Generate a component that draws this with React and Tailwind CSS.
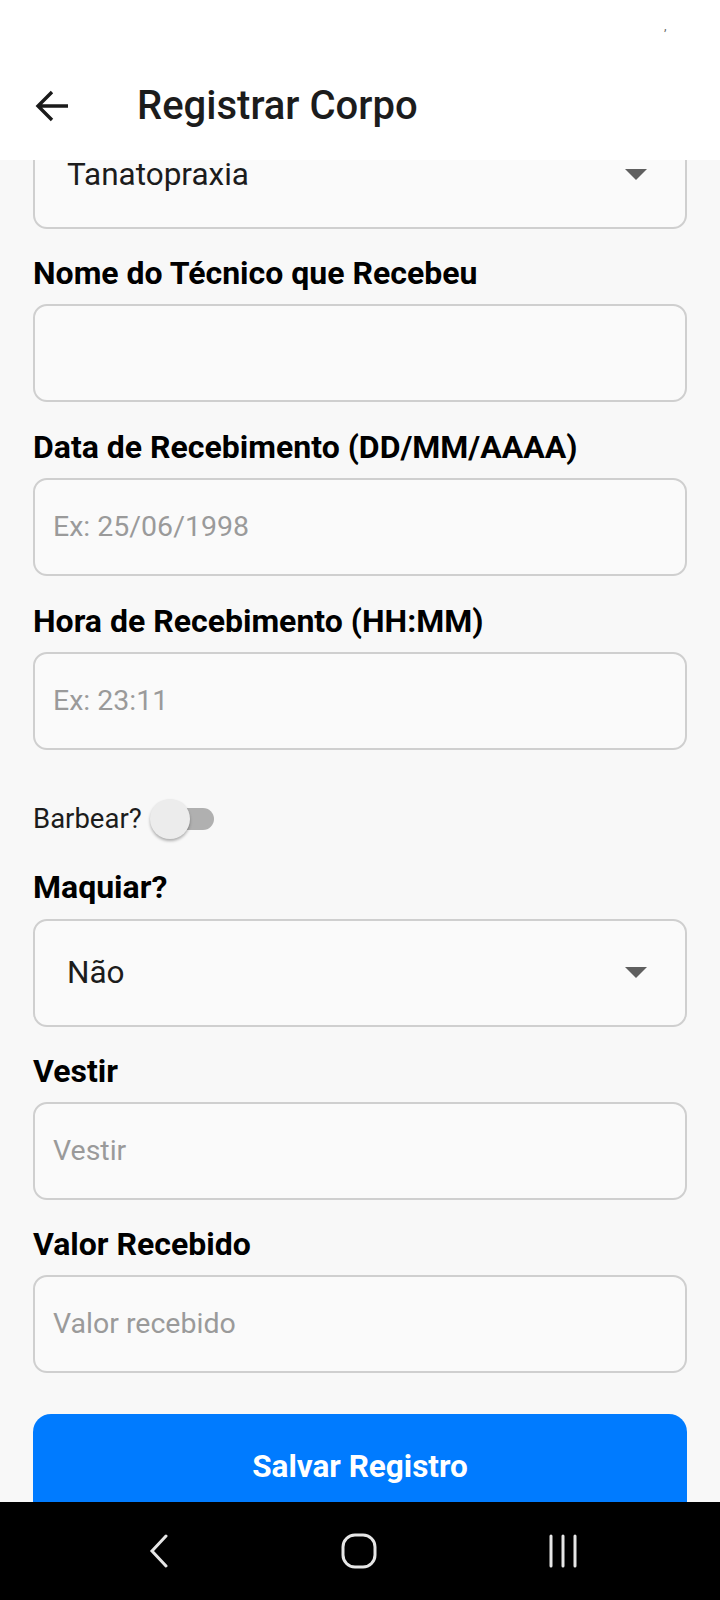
// App.jsx
const font = { fontFamily: "Roboto, 'Noto Sans', sans-serif" };

function Caret() {
  return (
    <svg width="22" height="12" viewBox="0 0 22 12" className="shrink-0">
      <path d="M0 0 H22 L11 11 Z" fill="#5f5f5f" />
    </svg>
  );
}

function SelectBox({ value, className = "" }) {
  return (
    <div
      className={`h-[108px] rounded-[14px] border-2 border-[#cfcfcf] bg-[#fafafa] flex items-center justify-between pl-[32px] pr-[38px] ${className}`}
    >
      <span className="text-[31.5px] text-[#1c1c1c]">{value}</span>
      <Caret />
    </div>
  );
}

function Field({ label, placeholder, className = "" }) {
  return (
    <div className={className}>
      <div className="text-[32px] font-bold leading-[34px] text-black mb-[14px]">{label}</div>
      <div className="h-[98px] rounded-[14px] border-2 border-[#cfcfcf] bg-[#fafafa] flex items-center pl-[18px]">
        {placeholder && <span className="text-[28.5px] text-[#9a9a9a]">{placeholder}</span>}
      </div>
    </div>
  );
}

export default function App() {
  return (
    <div className="w-[720px] h-[1600px] flex flex-col bg-[#f8f8f8] overflow-hidden" style={font}>
      {/* Header */}
      <div className="h-[160px] bg-white shrink-0 relative z-10 flex items-end">
        <div className="h-[108px] flex items-center w-full">
          <svg width="34" height="32" viewBox="0 0 34 32" className="ml-[35px]">
            <path d="M33 16 H4 M17 2 L3 16 L17 30" fill="none" stroke="#1a1a1a" strokeWidth="3.4" />
          </svg>
          <h1 className="ml-[68px] text-[40px] font-medium text-[#1c1c1c]">Registrar Corpo</h1>
        </div>
        <span className="absolute top-[26px] left-[664px] text-[12px] text-[#666]">ʼ</span>
      </div>

      {/* Form */}
      <div className="flex-1 overflow-hidden px-[33px]">
        <SelectBox value="Tanatopraxia" className="-mt-[39px]" />

        <Field label="Nome do Técnico que Recebeu" className="mt-[27px]" />
        <Field label="Data de Recebimento (DD/MM/AAAA)" placeholder="Ex: 25/06/1998" className="mt-[28px]" />
        <Field label="Hora de Recebimento (HH:MM)" placeholder="Ex: 23:11" className="mt-[28px]" />

        <div className="mt-[47px] h-[44px] flex items-center">
          <span className="text-[27.5px] text-[#1c1c1c]">Barbear?</span>
          <div className="relative ml-[8px] w-[64px] h-[44px] flex items-center">
            <div className="absolute left-[10px] right-0 h-[22px] rounded-full bg-[#b0b0b0]" />
            <div className="absolute left-0 w-[40px] h-[40px] rounded-full bg-[#ececec] shadow-[0_2px_3px_rgba(0,0,0,0.3)]" />
          </div>
        </div>

        <div className="mt-[29px]">
          <div className="text-[32px] font-bold leading-[34px] text-black mb-[15px]">Maquiar?</div>
          <SelectBox value="Não" />
        </div>

        <Field label="Vestir" placeholder="Vestir" className="mt-[27px]" />
        <Field label="Valor Recebido" placeholder="Valor recebido" className="mt-[27px]" />

        <button className="mt-[41px] w-full h-[106px] rounded-[18px] bg-[#007bff] text-white text-[31.5px] font-bold">
          Salvar Registro
        </button>
      </div>

      {/* Android nav bar */}
      <div className="h-[98px] shrink-0 bg-black flex items-center pl-[147px] gap-[170px]">
        <svg width="24" height="34" viewBox="0 0 24 34">
          <path d="M19 2 L5 17 L19 32" fill="none" stroke="#e6e6e6" strokeWidth="3" strokeLinecap="round" />
        </svg>
        <svg width="36" height="36" viewBox="0 0 36 36">
          <rect x="2" y="2" width="32" height="32" rx="12" fill="none" stroke="#e6e6e6" strokeWidth="3" />
        </svg>
        <svg width="32" height="34" viewBox="0 0 32 34">
          <path d="M4 2 V32 M16 2 V32 M28 2 V32" stroke="#e6e6e6" strokeWidth="3" strokeLinecap="round" />
        </svg>
      </div>
    </div>
  );
}
